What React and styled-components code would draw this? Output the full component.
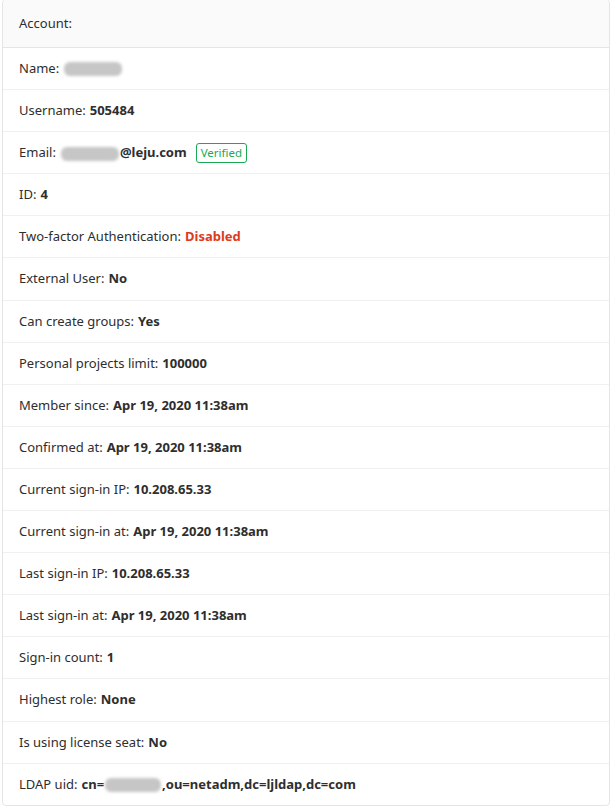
import React from "react";
import styled, { createGlobalStyle } from "styled-components";

const Global = createGlobalStyle`
  html, body { margin: 0; padding: 0; background: #fff; }
  body { font-family: "Noto Sans", "Open Sans", sans-serif; color: #2e2e2e; }
`;

const Page = styled.div`
  padding: 0 2px 0 2px;
  width: 608px;
`;

const Card = styled.div`
  margin-top: -1px;
  border: 1px solid #e5e5e5;
  border-radius: 4px;
  overflow: hidden;
  background: #fff;
`;

const Header = styled.div`
  background: #fafafa;
  border-bottom: 1px solid #e5e5e5;
  padding: 13px 16px;
  font-size: 13px;
  line-height: 21px;
`;

const List = styled.ul`
  list-style: none;
  margin: 0;
  padding: 0;
`;

const Row = styled.li`
  padding: 10px 16px;
  font-size: 13px;
  line-height: 21.1px;
  border-bottom: 1px solid #f0f0f0;
  display: flex;
  align-items: center;
  white-space: nowrap;
  &:last-child { border-bottom: none; }
`;

const Value = styled.strong`
  font-weight: 700;
  color: ${(p) => (p.$danger ? "#db3b21" : "#2e2e2e")};
`;

const Blur = styled.span`
  display: inline-block;
  width: ${(p) => p.$w}px;
  height: 14px;
  background: #c6c6c6;
  border-radius: 6px;
  filter: blur(1.5px);
  vertical-align: middle;
  margin: 0 1px;
`;

const Badge = styled.span`
  display: inline-block;
  margin-left: 9px;
  border: 1px solid #1aaa55;
  color: #1aaa55;
  border-radius: 3px;
  padding: 0 4px;
  font-size: 11.5px;
  line-height: 18px;
`;

const Label = styled.span`
  margin-right: 4px;
`;

const rows = [
  ["Name:", <Blur $w={58} />],
  ["Username:", <Value>505484</Value>],
  ["Email:", <><Value><Blur $w={58} />@leju.com</Value><Badge>Verified</Badge></>],
  ["ID:", <Value>4</Value>],
  ["Two-factor Authentication:", <Value $danger>Disabled</Value>],
  ["External User:", <Value>No</Value>],
  ["Can create groups:", <Value>Yes</Value>],
  ["Personal projects limit:", <Value>100000</Value>],
  ["Member since:", <Value>Apr 19, 2020 11:38am</Value>],
  ["Confirmed at:", <Value>Apr 19, 2020 11:38am</Value>],
  ["Current sign-in IP:", <Value>10.208.65.33</Value>],
  ["Current sign-in at:", <Value>Apr 19, 2020 11:38am</Value>],
  ["Last sign-in IP:", <Value>10.208.65.33</Value>],
  ["Last sign-in at:", <Value>Apr 19, 2020 11:38am</Value>],
  ["Sign-in count:", <Value>1</Value>],
  ["Highest role:", <Value>None</Value>],
  ["Is using license seat:", <Value>No</Value>],
  ["LDAP uid:", <Value>cn=<Blur $w={56} />,ou=netadm,dc=ljldap,dc=com</Value>],
];

export default function App() {
  return (
    <Page>
      <Global />
      <Card>
        <Header>Account:</Header>
        <List>
          {rows.map(([label, value], i) => (
            <Row key={i}>
              <Label>{label}</Label>
              {value}
            </Row>
          ))}
        </List>
      </Card>
    </Page>
  );
}
